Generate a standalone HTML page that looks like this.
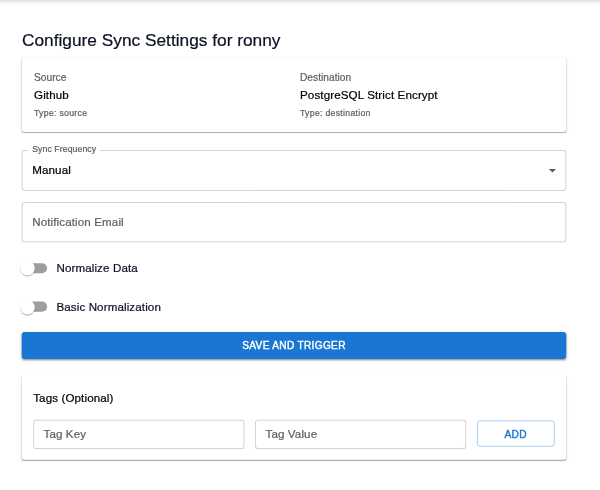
<!DOCTYPE html>
<html><head><meta charset="utf-8">
<style>
*{box-sizing:border-box;margin:0;padding:0}
html,body{width:600px;height:490px;background:#fff;overflow:hidden}
body{font-family:"Liberation Sans",Arial,sans-serif;color:#000;position:relative}
#w{will-change:opacity;position:absolute;left:0;top:0;width:828px;height:676px;transform:scale(.725);transform-origin:0 0}
.abs{position:absolute;white-space:nowrap;-webkit-text-stroke:.3px currentColor}
.topshadow{left:0;top:0;width:828px;height:11px;background:linear-gradient(#dedede 0,#e9e9e9 2px,#f5f5f5 4px,#fcfcfc 7px,#fff 9px)}
.card{background:#fff;border-radius:4px;box-shadow:0 2px 1px -1px rgba(0,0,0,.2),0 1px 1px 0 rgba(0,0,0,.08),0 1px 3px 0 rgba(0,0,0,.1)}
.field{border:1px solid rgba(0,0,0,.23);border-radius:4px;background:#fff}
.lbl{color:#5e5e5e}
.navy{color:#0c1224}
.b1{font-size:16px;line-height:24px;letter-spacing:.15px}
.b2{font-size:14px;line-height:20px;letter-spacing:.05px}
.cap{font-size:12px;line-height:20px;letter-spacing:.4px}
.btn{font-size:14px;letter-spacing:.4px;text-align:center;-webkit-text-stroke:.55px currentColor}
.track{height:14px;width:34px;border-radius:7px;background:#9e9e9e}
.thumb{width:20px;height:20px;border-radius:50%;background:#fff;box-shadow:0 2px 1px -1px rgba(0,0,0,.2),0 1px 1px 0 rgba(0,0,0,.14),0 1px 3px 0 rgba(0,0,0,.12)}
</style></head><body><div id="w">
<div class="abs topshadow"></div>
<div class="abs navy" id="title" style="left:30.34px;top:41.24px;font-size:23.85px;line-height:30px">Configure Sync Settings for ronny</div>

<div class="abs card" style="left:30px;top:80px;width:751px;height:102px"></div>
<div class="abs lbl b2" id="t_source" style="left:46.9px;top:96.97px">Source</div>
<div class="abs b1" id="t_github" style="left:46.9px;top:118.62px">Github</div>
<div class="abs lbl cap" id="t_type" style="left:46.9px;top:145.93px">Type: source</div>
<div class="abs lbl b2" style="left:413.79px;top:96.97px">Destination</div>
<div class="abs b1" style="left:413.79px;top:118.62px">PostgreSQL Strict Encrypt</div>
<div class="abs lbl cap" style="left:413.79px;top:145.93px">Type: destination</div>

<div class="abs field" style="left:30px;top:206.5px;width:751px;height:56px"></div>
<div class="abs lbl cap" id="t_sync" style="left:39.45px;top:196.28px;background:#fff;padding:0 5px;letter-spacing:.11px">Sync Frequency</div>
<div class="abs b1" id="t_manual" style="left:44.41px;top:223.45px">Manual</div>
<svg class="abs" style="left:757.24px;top:232.55px" width="10" height="5" viewBox="0 0 10 5"><path d="M0 0h10L5 5z" fill="#555"/></svg>

<div class="abs field" style="left:30px;top:278.76px;width:751px;height:55.5px"></div>
<div class="abs lbl b1" id="t_notif" style="left:44.41px;top:295.17px">Notification Email</div>

<div class="abs track" style="left:31.03px;top:362.62px"></div>
<div class="abs thumb" style="left:28px;top:360px"></div>
<div class="abs b1 navy" id="t_norm" style="left:77.79px;top:358.34px">Normalize Data</div>

<div class="abs track" style="left:31.03px;top:416.28px"></div>
<div class="abs thumb" style="left:28px;top:413.66px"></div>
<div class="abs b1 navy" id="t_basic" style="left:77.79px;top:412.14px">Basic Normalization</div>

<div class="abs btn" id="t_save" style="left:30px;top:458px;width:751px;height:37px;border-radius:4px;background:#1976d2;box-shadow:0 3px 1px -2px rgba(0,0,0,.2),0 2px 2px 0 rgba(0,0,0,.14),0 1px 5px 0 rgba(0,0,0,.12);color:#fff;line-height:37.24px">SAVE AND TRIGGER</div>

<div class="abs card" style="left:30px;top:518px;width:751px;height:116px"></div>
<div class="abs b1" id="t_tags" style="left:45.79px;top:536.55px">Tags (Optional)</div>
<div class="abs field" style="left:46.48px;top:578.62px;width:290.34px;height:40px"></div>
<div class="abs lbl b1" id="t_key" style="left:60px;top:587.31px">Tag Key</div>
<div class="abs field" style="left:352.28px;top:578.62px;width:290.34px;height:40px"></div>
<div class="abs lbl b1" id="t_val" style="left:366.21px;top:587.31px">Tag Value</div>
<div class="abs btn" id="t_add" style="left:657.93px;top:579.59px;width:106.62px;height:36.69px;border:1px solid rgba(25,118,210,.5);border-radius:4px;color:#1976d2;line-height:37.93px">ADD</div>
</div></body></html>
